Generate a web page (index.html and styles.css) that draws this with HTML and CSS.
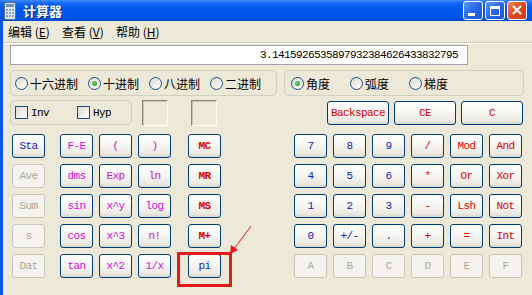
FILE: index.html
```html
<!DOCTYPE html>
<html lang="zh-CN">
<head>
  <meta charset="UTF-8" />
  <title>计算器</title>
  <link rel="stylesheet" href="styles.css">
</head>
<body>
  <div class="window">
    <div class="titlebar">
      <svg class="app-icon" width="16" height="18" viewBox="0 0 16 18">
        <rect x="2.5" y="0.5" width="11" height="17" rx="1.5" fill="#dfe8f5" stroke="#5b6f94"/>
        <rect x="4" y="2" width="8" height="3" fill="#6f93c4"/>
        <rect x="4" y="7" width="2" height="2" fill="#8aa0c0"/><rect x="7" y="7" width="2" height="2" fill="#8aa0c0"/><rect x="10" y="7" width="2" height="2" fill="#8aa0c0"/>
        <rect x="4" y="10" width="2" height="2" fill="#8aa0c0"/><rect x="7" y="10" width="2" height="2" fill="#8aa0c0"/><rect x="10" y="10" width="2" height="2" fill="#8aa0c0"/>
        <rect x="4" y="13" width="2" height="2" fill="#8aa0c0"/><rect x="7" y="13" width="2" height="2" fill="#8aa0c0"/><rect x="10" y="13" width="2" height="2" fill="#8aa0c0"/>
      </svg>
      <span class="title">计算器</span>
      <div class="controls">
        <div class="ctl"><span class="min-glyph"></span></div>
        <div class="ctl"><span class="max-glyph"></span></div>
        <div class="ctl close">
          <svg width="18" height="17" viewBox="0 0 18 17"><path d="M5 4 L13 12 M13 4 L5 12" stroke="#fff" stroke-width="2"/></svg>
        </div>
      </div>
    </div>

    <div class="frame">
      <div class="menu">
        <span>编辑 (<u>E</u>)</span>
        <span>查看 (<u>V</u>)</span>
        <span>帮助 (<u>H</u>)</span>
      </div>
      <div class="sep"></div>

      <div class="display">3.1415926535897932384626433832795</div>

      <div class="modes">
        <div class="group base">
          <label class="opt"><span class="radio"></span>十六进制</label>
          <label class="opt"><span class="radio on"></span>十进制</label>
          <label class="opt"><span class="radio"></span>八进制</label>
          <label class="opt"><span class="radio"></span>二进制</label>
        </div>
        <div class="group angle">
          <label class="opt"><span class="radio on"></span>角度</label>
          <label class="opt"><span class="radio"></span>弧度</label>
          <label class="opt"><span class="radio"></span>梯度</label>
        </div>
      </div>

      <div class="row2">
        <div class="group flags">
          <label class="chk"><span class="box"></span>Inv</label>
          <label class="chk"><span class="box"></span>Hyp</label>
        </div>
        <div class="sunken first"></div>
        <div class="sunken second"></div>
        <div class="edit-keys">
          <button class="btn wide r">Backspace</button>
          <button class="btn wide r">CE</button>
          <button class="btn wide r">C</button>
        </div>
      </div>

      <div class="keys">
        <div class="col stat">
          <button class="btn">Sta</button>
          <button class="btn off">Ave</button>
          <button class="btn off">Sum</button>
          <button class="btn off">s</button>
          <button class="btn off">Dat</button>
        </div>
        <div class="grid3 funcs">
          <button class="btn m">F-E</button><button class="btn m">(</button><button class="btn m">)</button>
          <button class="btn m">dms</button><button class="btn m">Exp</button><button class="btn m">ln</button>
          <button class="btn m">sin</button><button class="btn m">x^y</button><button class="btn m">log</button>
          <button class="btn m">cos</button><button class="btn m">x^3</button><button class="btn m">n!</button>
          <button class="btn m">tan</button><button class="btn m">x^2</button><button class="btn m">1/x</button>
        </div>
        <div class="col mem">
          <button class="btn r bold">MC</button>
          <button class="btn r bold">MR</button>
          <button class="btn r bold">MS</button>
          <button class="btn r bold">M+</button>
          <button class="btn">pi</button>
        </div>
        <div class="grid6 digits">
          <button class="btn">7</button><button class="btn">8</button><button class="btn">9</button><button class="btn r">/</button><button class="btn r">Mod</button><button class="btn r">And</button>
          <button class="btn">4</button><button class="btn">5</button><button class="btn">6</button><button class="btn r">*</button><button class="btn r">Or</button><button class="btn r">Xor</button>
          <button class="btn">1</button><button class="btn">2</button><button class="btn">3</button><button class="btn r">-</button><button class="btn r">Lsh</button><button class="btn r">Not</button>
          <button class="btn">0</button><button class="btn">+/-</button><button class="btn">.</button><button class="btn r">+</button><button class="btn r">=</button><button class="btn r">Int</button>
          <button class="btn off">A</button><button class="btn off">B</button><button class="btn off">C</button><button class="btn off">D</button><button class="btn off">E</button><button class="btn off">F</button>
        </div>
      </div>
    </div>

    <!-- red mark drawn over the pi key -->
    <svg class="annot" width="532" height="295" viewBox="0 0 532 295">
      <rect x="178.5" y="253.5" width="52" height="32" fill="none" stroke="#e3191c" stroke-width="3"/>
      <line x1="251" y1="226" x2="234" y2="249" stroke="#e3191c" stroke-width="1"/>
      <polygon points="230,254 231,245 238,250" fill="#e3191c"/>
    </svg>
  </div>
</body>
</html>
```

FILE: styles.css
```css
* {
  box-sizing: border-box;
}
body {
  margin: 0;
  width: 532px;
  height: 295px;
  overflow: hidden;
  background: #ece9d8;
  font-family: "Noto Sans CJK SC", sans-serif;
  font-size: 12px;
  color: #000;
}
.window {
  position: relative;
  height: 295px;
  display: flex;
  flex-direction: column;
}
.titlebar {
  height: 21px;
  display: flex;
  align-items: center;
  padding: 0 5px 0 2px;
  background: linear-gradient(#3e8ef8 0%, #1466ef 15%, #0058ee 45%, #0056e6 80%, #004bd4 100%);
}
.app-icon {
  margin-right: 5px;
}
.title {
  flex: 1;
  color: #fff;
  font-size: 13px;
  font-weight: bold;
  text-shadow: 1px 1px 0 #0b2a8c;
  line-height: 21px;
}
.controls {
  display: flex;
  gap: 2px;
}
.ctl {
  width: 20px;
  height: 19px;
  border: 1px solid #fff;
  border-radius: 3px;
  background: linear-gradient(135deg, #5c9af7 0%, #2867e6 50%, #1a55d8 100%);
  position: relative;
  display: flex;
  align-items: center;
  justify-content: center;
}
.ctl.close {
  background: linear-gradient(135deg, #ee8a66 0%, #dd4a20 50%, #c9391a 100%);
}
.min-glyph {
  position: absolute;
  left: 4px;
  top: 11px;
  width: 7px;
  height: 3px;
  background: #fff;
}
.max-glyph {
  width: 10px;
  height: 10px;
  border: 1px solid #fff;
  border-top-width: 3px;
}
.frame {
  flex: 1;
  border-left: 3px solid #0a55e0;
  padding-left: 7px;
}
.menu {
  height: 21px;
  display: flex;
  align-items: center;
  margin-left: -2px;
}
.menu span {
  width: 54px;
  font-size: 12px;
}
.sep {
  height: 2px;
  margin-left: -7px;
  border-top: 1px solid #d0ccb8;
  border-bottom: 1px solid #fff;
}
.display {
  margin-top: 1px;
  width: 458px;
  height: 20px;
  background: #fff;
  border: 1px solid #9ea3a8;
  text-align: right;
  padding-right: 9px;
  font-family: "Liberation Mono", monospace;
  font-size: 11px;
  letter-spacing: -0.6px;
  line-height: 18px;
}
.modes {
  margin-top: 5px;
  display: flex;
}
.group {
  height: 26px;
  border: 1px solid #d0d0bf;
  border-radius: 5px;
  display: flex;
  align-items: center;
}
.base {
  width: 267px;
  padding-left: 4px;
  gap: 10px;
}
.angle {
  width: 240px;
  margin-left: 7px;
  padding-left: 6px;
  gap: 20px;
}
.opt,
.chk {
  display: flex;
  align-items: center;
}
.radio {
  width: 13px;
  height: 13px;
  border-radius: 50%;
  border: 1px solid #1c5180;
  background: linear-gradient(135deg, #dcd9cf, #fff);
  margin-right: 2px;
  display: flex;
  align-items: center;
  justify-content: center;
}
.radio.on::after {
  content: "";
  width: 5px;
  height: 5px;
  border-radius: 50%;
  background: radial-gradient(circle at 35% 35%, #5fd45f, #219a21);
}
.row2 {
  margin-top: 4px;
  height: 26px;
  display: flex;
  align-items: flex-start;
}
.flags {
  width: 122px;
  height: 25px;
  padding-left: 4px;
  gap: 28px;
}
.box {
  width: 13px;
  height: 13px;
  border: 1px solid #1c5180;
  background: linear-gradient(135deg, #dcd9cf, #fff);
  margin-right: 3px;
}
.chk {
  font-family: "Liberation Mono", monospace;
  font-size: 11px;
  letter-spacing: -0.6px;
}
.sunken {
  width: 26px;
  height: 26px;
  border: 1px solid;
  border-color: #8a8877 #fff #fff #8a8877;
  box-shadow: inset 1px 1px 0 #c6c3b4;
}
.sunken.first {
  margin-left: 10px;
}
.sunken.second {
  margin-left: 23px;
}
.edit-keys {
  margin-left: 110px;
  margin-top: 1px;
  display: flex;
  gap: 5px;
}
.btn {
  width: 33px;
  height: 24px;
  padding: 0;
  margin: 0;
  border: 1px solid #003c74;
  border-radius: 3px;
  background: linear-gradient(#ffffff 0%, #f6f6f2 45%, #ebe9e1 85%, #d9d6cb 100%);
  font-family: "Liberation Mono", monospace;
  font-size: 11px;
  letter-spacing: -0.6px;
  color: #1020b8;
  display: flex;
  align-items: center;
  justify-content: center;
}
.btn.wide {
  width: 62px;
}
.btn.r {
  color: #e00000;
}
.btn.m {
  color: #d010d0;
}
.btn.bold {
  font-weight: bold;
}
.btn.off {
  color: #aca899;
  border-color: #c9c7ba;
  background: #f4f3ee;
}
.keys {
  margin-top: 8px;
  display: flex;
}
.col {
  display: flex;
  flex-direction: column;
  gap: 6px;
}
.grid3 {
  display: grid;
  grid-template-columns: repeat(3, 33px);
  gap: 6px;
}
.grid6 {
  display: grid;
  grid-template-columns: repeat(6, 33px);
  gap: 6px;
}
.stat {
  margin-left: 2px;
}
.funcs {
  margin-left: 15px;
}
.mem {
  margin-left: 17px;
}
.digits {
  margin-left: 73px;
}
.annot {
  position: absolute;
  left: 0;
  top: 0;
  pointer-events: none;
}
```
